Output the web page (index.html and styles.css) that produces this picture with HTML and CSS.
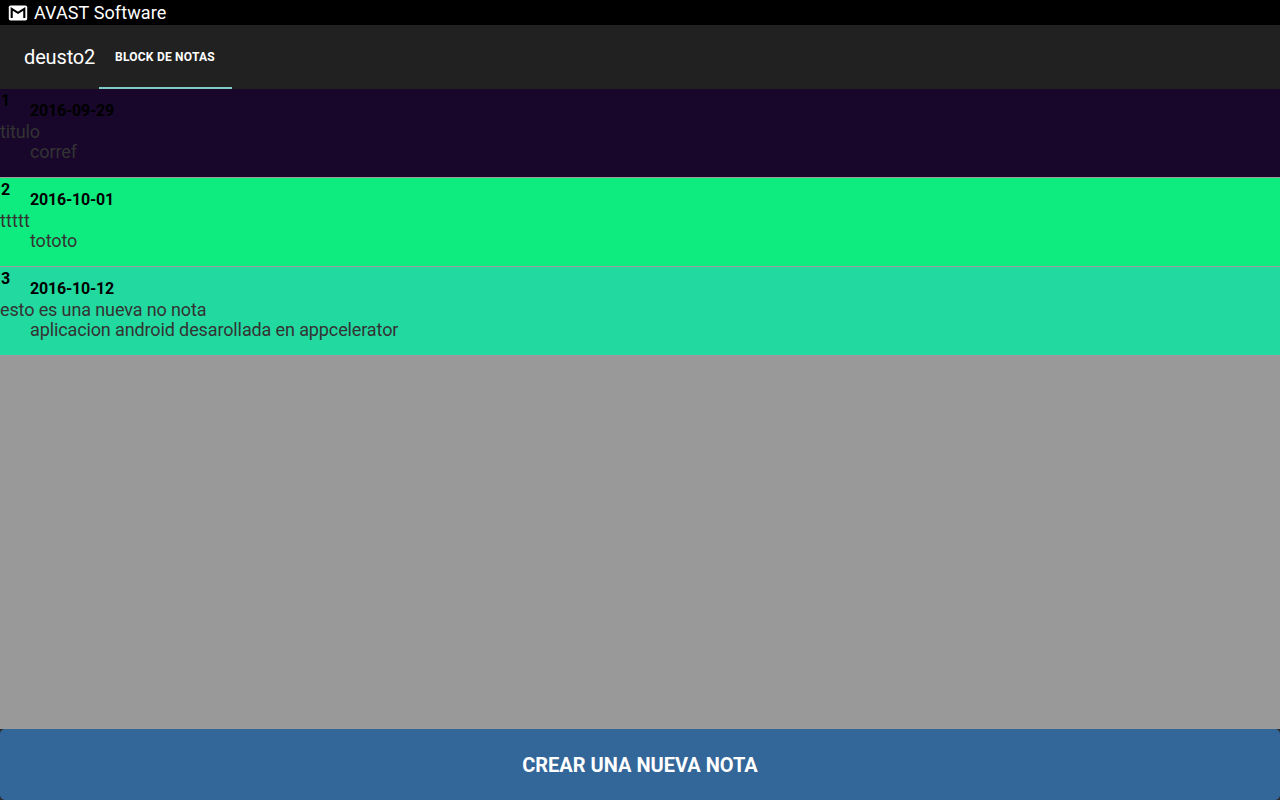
FILE: index.html
```html
<!DOCTYPE html>
<html lang="es">
<head>
<meta charset="utf-8">
<title>deusto2</title>
<link rel="stylesheet" href="styles.css">
</head>
<body>
<div class="status">
  <svg class="mail" width="20" height="16" viewBox="0 0 20 16"><rect x="0.8" y="0.4" width="18.400" height="15.200" rx="1.800" fill="#fff"/><path d="M3.700 13V3.800L10 7.800l6.300-4v9.200" fill="none" stroke="#000" stroke-width="2.100"/></svg>
  <span class="sender">AVAST Software</span>
</div>
<header class="bar">
  <h1 class="title">deusto2</h1>
  <div class="tab">BLOCK DE NOTAS</div>
</header>
<main class="list">
  <article class="note note-dark"><b class="num">1</b><b class="date">2016-09-29</b><span class="name">titulo</span><span class="text">corref</span></article>
  <article class="note note-green"><b class="num">2</b><b class="date">2016-10-01</b><span class="name name-wide">ttttt</span><span class="text">tototo</span></article>
  <article class="note note-teal"><b class="num">3</b><b class="date">2016-10-12</b><span class="name">esto es una nueva no nota</span><span class="text">aplicacion android desarollada en appcelerator</span></article>
</main>
<div class="footer"><button class="create">CREAR UNA NUEVA NOTA</button></div>
</body>
</html>
```
FILE: styles.css
```css
* { box-sizing: border-box; }
body { margin: 0; height: 800px; display: flex; flex-direction: column; overflow: hidden; background: #999; font-family: Roboto, sans-serif; }
.status { height: 25px; flex: none; display: flex; align-items: center; gap: 6px; padding-left: 8px; background: #000; color: #fff; font-size: 18px; }
.sender { letter-spacing: 0.1px; }
.bar { height: 64px; flex: none; display: flex; background: #212121; color: #fff; }
.title { margin: 0; padding-left: 24px; width: 99px; font-size: 20px; font-weight: 400; line-height: 64px; letter-spacing: -0.15px; white-space: nowrap; }
.tab { width: 133px; padding-left: 16px; border-bottom: 2px solid #80cbc4; font-size: 12px; font-weight: 700; line-height: 64px; letter-spacing: 0.23px; white-space: nowrap; }
.list { flex: 1; }
.note { height: 89px; display: grid; grid-template-columns: 30px 1fr; grid-template-rows: 33px 20px 20px; border-bottom: 1px solid #a09c9c; color: #333; font-size: 18px; line-height: 20px; letter-spacing: -0.12px; }
.num, .date { color: #000; font-size: 16px; letter-spacing: -0.2px; }
.num { padding: 2px 0 0 1px; }
.date { padding-top: 12px; }
.name { grid-column: 1 / 3; }
.name-wide { letter-spacing: 0.12px; }
.text { grid-column: 2; }
.note-dark { background: #18072b; }
.note-green { background: #0eec80; }
.note-teal { background: #22d9a0; }
.footer { height: 71px; flex: none; background: #2c2c2c; }
.create { display: block; width: 100%; height: 71px; border: 0; border-radius: 5px; background: #336699; color: #fff; font: 700 20px/71px Roboto, sans-serif; }
```
